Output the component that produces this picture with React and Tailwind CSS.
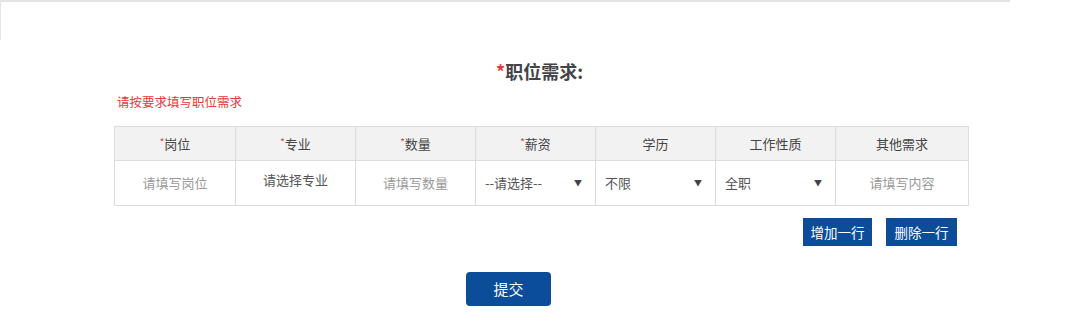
import React from 'react'

const font = { fontFamily: '"Microsoft YaHei", "Noto Sans CJK SC", sans-serif' }

const headers = [
    { label: '岗位', req: true, w: 'w-[121px]' },
    { label: '专业', req: true, w: 'w-[120px]' },
    { label: '数量', req: true, w: 'w-[120px]' },
    { label: '薪资', req: true, w: 'w-[120px]' },
    { label: '学历', req: false, w: 'w-[120px]' },
    { label: '工作性质', req: false, w: 'w-[120px]' },
    { label: '其他需求', req: false, w: 'w-[133px]' },
]

const Select = ({ value }) => (
    <div className="flex items-center justify-between h-full pl-[9px] pr-[13px] text-[13px] text-[#555]">
        <span>{value}</span>
        <span className="text-[8px] text-[#444]">▼</span>
    </div>
)

const App = () => {
    return (
        <div className="w-[1080px] h-[325px] bg-white relative" style={font}>
            <div className="absolute left-0 top-0 w-[1010px] h-[40px] border-t-2 border-l border-[#e4e4e4]" />

            <div className="pt-[59px]">
                <h2 className="text-center text-[18px] font-bold text-[#444] leading-[24px] pr-[1px]">
                    <span className="text-[#e4393c]">*</span>职位需求:
                </h2>
                <p className="ml-[117px] mt-[10px] text-[12.5px] text-[#e83a3a] leading-[18px]">请按要求填写职位需求</p>

                <table className="ml-[114px] mt-[15px] border-collapse table-fixed w-[854px]">
                    <thead>
                        <tr className="h-[34px] bg-[#f2f2f2]">
                            {headers.map((h) => (
                                <th key={h.label} className={`${h.w} border border-[#dcdcdc] font-normal text-[13px] text-[#444]`}>
                                    {h.req && <span className="text-[#e4393c] text-[10px] align-top">*</span>}
                                    {h.label}
                                </th>
                            ))}
                        </tr>
                    </thead>
                    <tbody>
                        <tr className="h-[45px] text-[13px]">
                            <td className="border border-[#dcdcdc] text-center text-[#999]">请填写岗位</td>
                            <td className="border border-[#dcdcdc] text-center text-[#555] align-top pt-[9px]">请选择专业</td>
                            <td className="border border-[#dcdcdc] text-center text-[#999]">请填写数量</td>
                            <td className="border border-[#dcdcdc]"><Select value="--请选择--" /></td>
                            <td className="border border-[#dcdcdc]"><Select value="不限" /></td>
                            <td className="border border-[#dcdcdc]"><Select value="全职" /></td>
                            <td className="border border-[#dcdcdc] text-center text-[#999]">请填写内容</td>
                        </tr>
                    </tbody>
                </table>

                <div className="flex justify-end gap-[14px] mt-[12px] w-[957px]">
                    <button className="w-[69px] h-[28px] bg-[#0b4d98] text-white text-[13.5px]">增加一行</button>
                    <button className="w-[71px] h-[28px] bg-[#0b4d98] text-white text-[13.5px]">删除一行</button>
                </div>

                <div className="flex mt-[26px] pl-[466px]">
                    <button className="w-[85px] h-[34px] rounded-[4px] bg-[#0b4d98] text-white text-[15px]">提交</button>
                </div>
            </div>
        </div>
    )
}

export default App
